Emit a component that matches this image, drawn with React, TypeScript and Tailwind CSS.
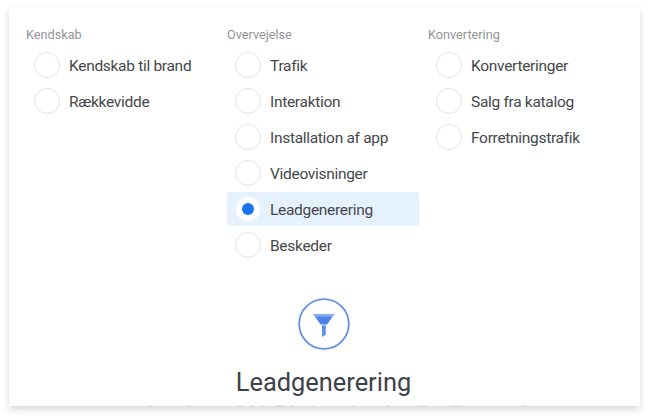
interface Objective {
  label: string;
  selected?: boolean;
}

interface ObjectiveGroup {
  title: string;
  objectives: Objective[];
}

const groups: ObjectiveGroup[] = [
  {
    title: 'Kendskab',
    objectives: [{ label: 'Kendskab til brand' }, { label: 'Rækkevidde' }],
  },
  {
    title: 'Overvejelse',
    objectives: [
      { label: 'Trafik' },
      { label: 'Interaktion' },
      { label: 'Installation af app' },
      { label: 'Videovisninger' },
      { label: 'Leadgenerering', selected: true },
      { label: 'Beskeder' },
    ],
  },
  {
    title: 'Konvertering',
    objectives: [{ label: 'Konverteringer' }, { label: 'Salg fra katalog' }, { label: 'Forretningstrafik' }],
  },
];

function ObjectiveRow({ label, selected }: Objective) {
  return (
    <div className={`flex h-[34px] items-center gap-[9px] rounded-[3px] pl-2 ${selected ? 'bg-[#e6f1fe]' : ''}`}>
      <span
        className={`flex size-[26px] shrink-0 items-center justify-center rounded-full border bg-white ${
          selected ? 'border-[#eef4fb]' : 'border-[#e2e2e2]'
        }`}
      >
        {selected && <span className="size-3 rounded-full bg-[#1a73ee]" />}
      </span>
      <span className="pt-px text-[15.5px] leading-5 tracking-[-0.3px] whitespace-nowrap text-[#46484b]">{label}</span>
    </div>
  );
}

function FunnelIcon() {
  return (
    <svg width="52" height="52" viewBox="0 0 52 52" fill="none">
      <circle cx="26" cy="26" r="24.8" stroke="#6590e2" strokeWidth="1.8" />
      <path d="M15 16h21.6l-1.5 2.2H16.5z" fill="#86abef" />
      <path d="M16.8 18.2h18l-5.8 8.3h-6.4z" fill="#4c82ea" />
      <path d="M24 27.2h3.8v9.6l-3.8 2.2z" fill="#6390ea" />
    </svg>
  );
}

// Tops of the description line that the card's lower edge cuts off
function ClippedDescription() {
  return (
    <svg className="mt-auto ml-[27px] h-px w-[380px] shrink-0" viewBox="0 0 380 1" stroke="#e6e6e6" aria-hidden="true">
      <path d="M1 .5h4M40 .5h4M90 .5h6M104 .5h3M114 .5h3M128 .5h9M144 .5h3M164 .5h3M204 .5h4M240 .5h3M271 .5h9M303 .5h12M374 .5h6" />
    </svg>
  );
}

export default function App() {
  return (
    <div className="h-[418px] w-[649px] overflow-hidden bg-white px-[9px] pt-2 font-['Roboto',sans-serif]">
      <div className="flex h-[398px] w-[631px] flex-col overflow-hidden bg-white pt-[18px] pl-[17px] shadow-[0_3px_7px_rgba(0,0,0,0.17)]">
        <div className="grid h-[236px] shrink-0 grid-cols-[192px_192px_192px] gap-[9px]">
          {groups.map((group) => (
            <div key={group.title}>
              <h3 className="mb-[6px] h-4 pt-px text-[12.7px] leading-4 text-[#929497]">{group.title}</h3>
              <div className="space-y-[2px]">
                {group.objectives.map((objective) => (
                  <ObjectiveRow key={objective.label} {...objective} />
                ))}
              </div>
            </div>
          ))}
        </div>

        {/* Selected objective */}
        <div className="mr-[19px] flex flex-1 flex-col items-center pt-9">
          <FunnelIcon />
          <h2 className="mt-4 text-[25.4px] leading-8 text-[#3d4148]">Leadgenerering</h2>
          <ClippedDescription />
        </div>
      </div>
    </div>
  );
}
